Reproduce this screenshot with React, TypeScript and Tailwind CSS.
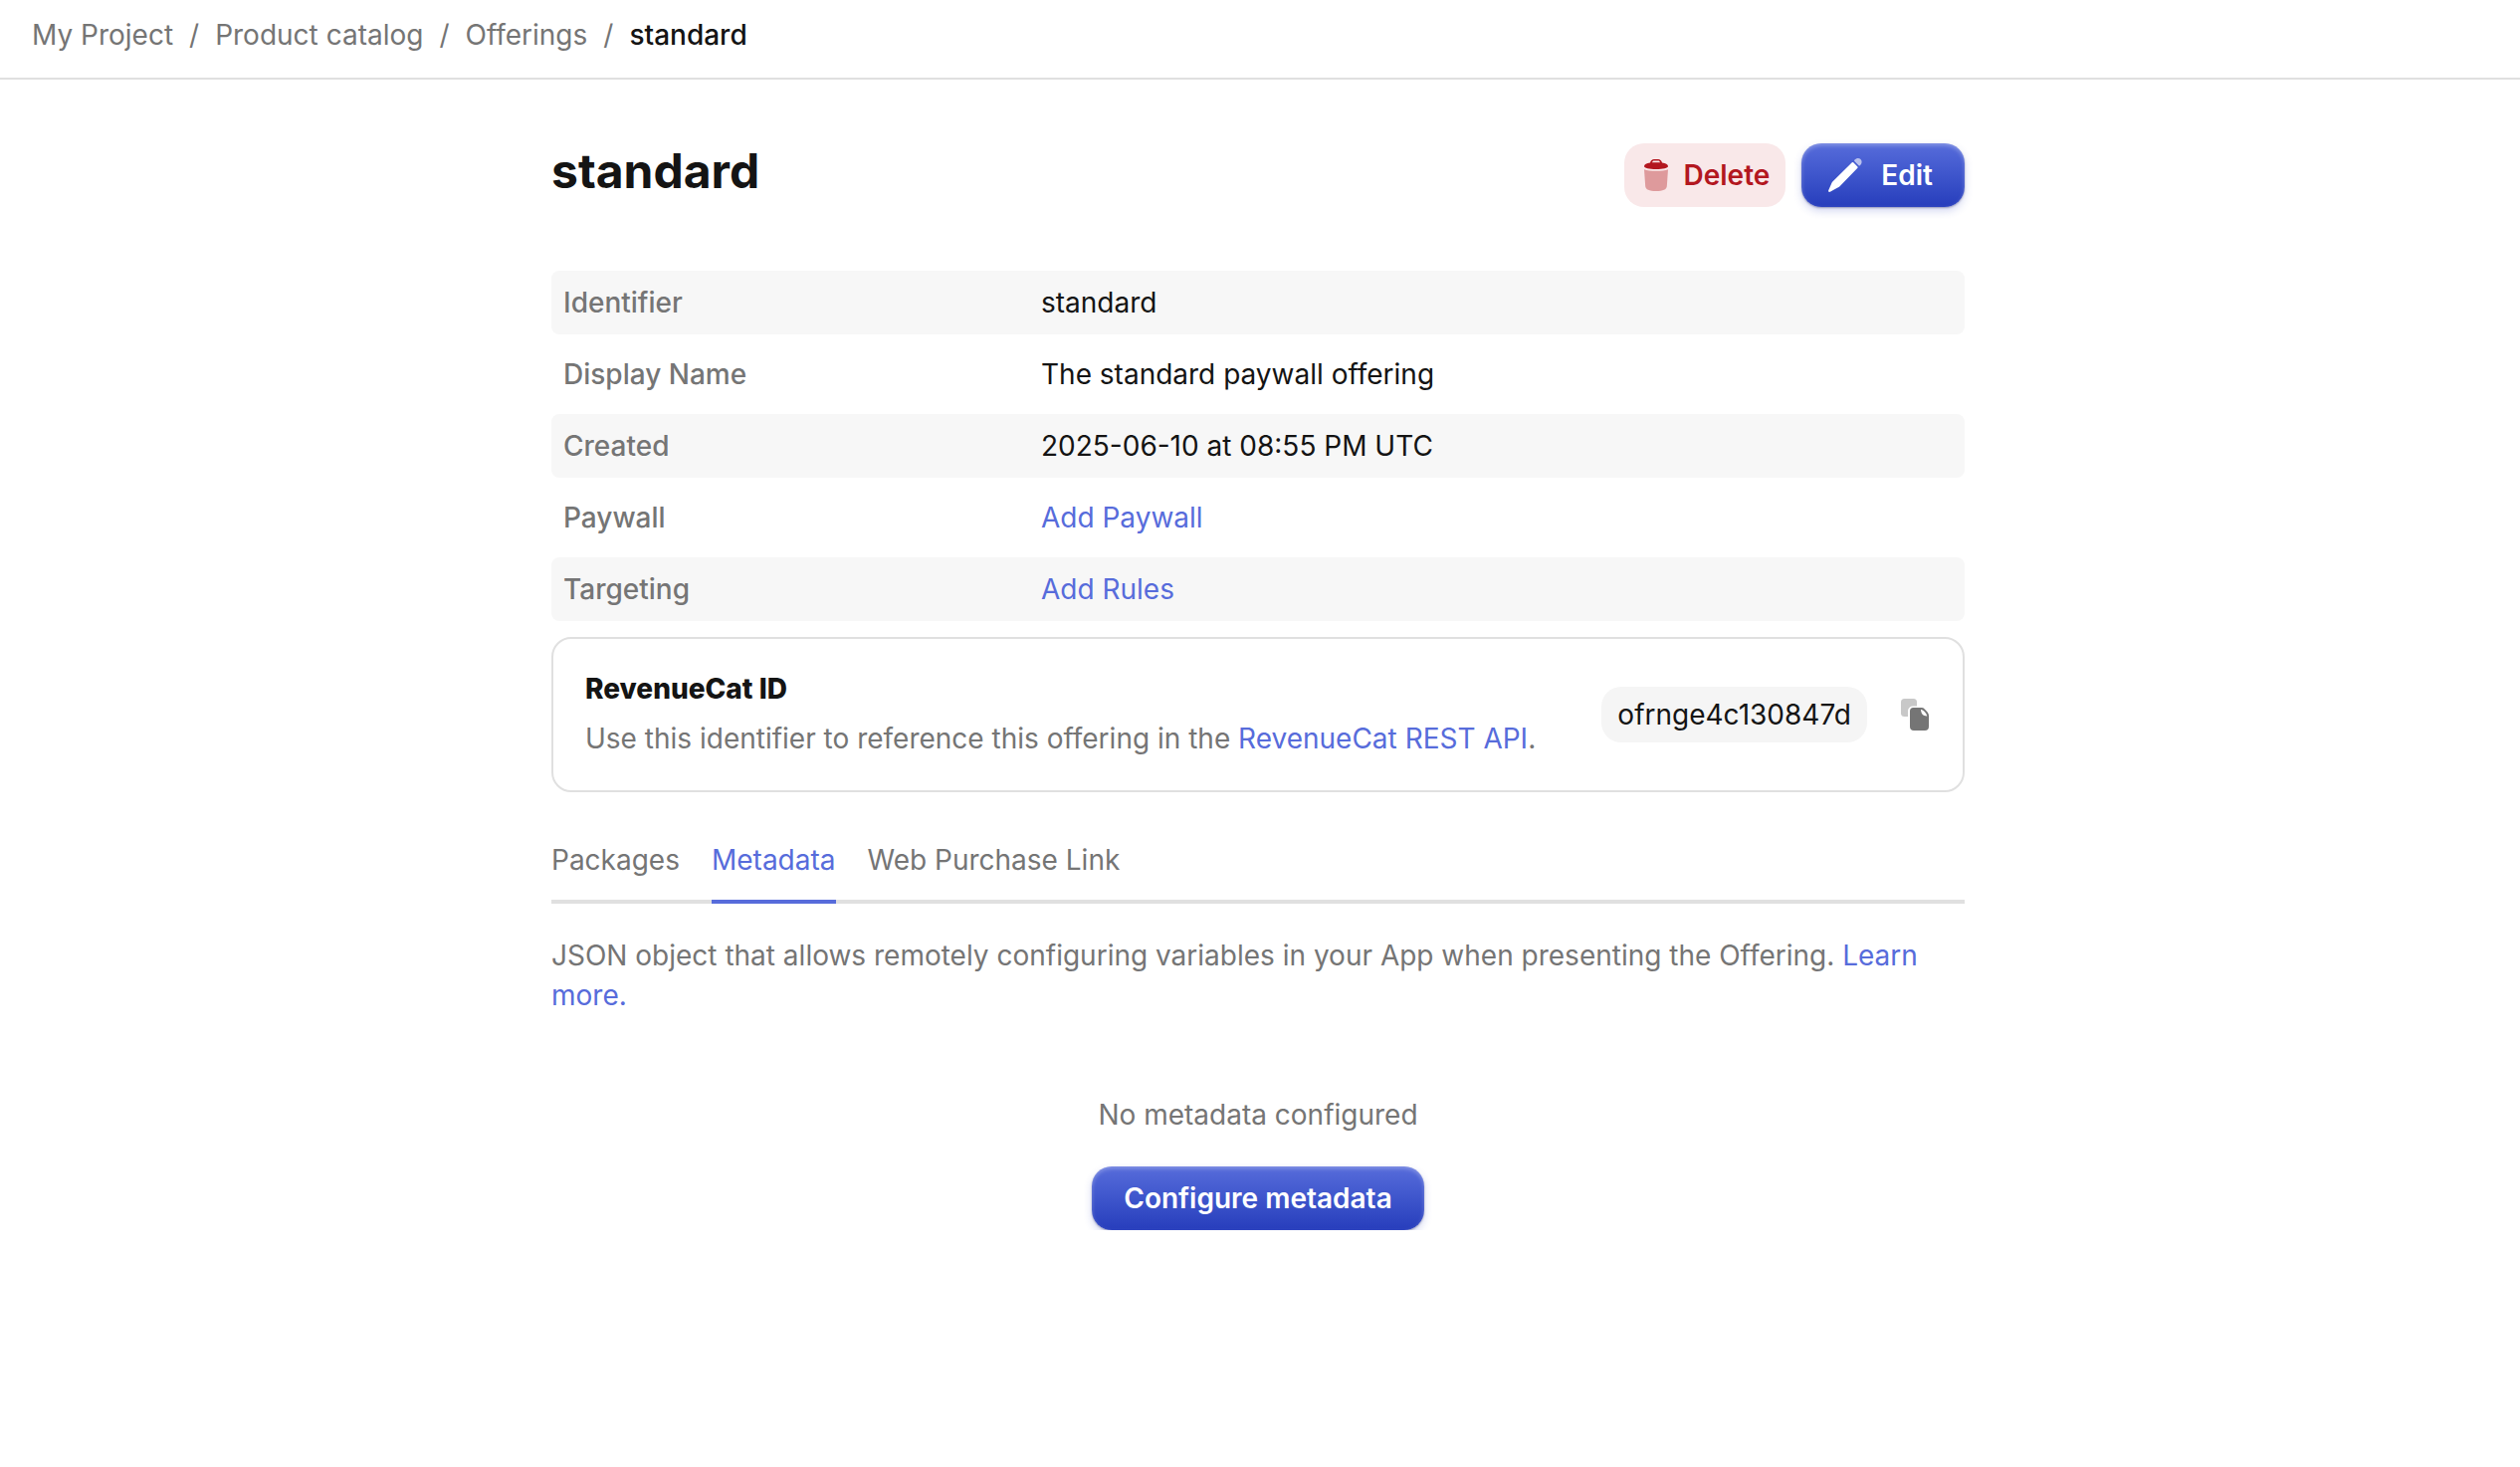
import type { ReactNode } from "react";

const crumbs = ["My Project", "Product catalog", "Offerings"];

const linkClass = "text-[#576cdb]";

const details: { label: string; value: ReactNode }[] = [
  { label: "Identifier", value: "standard" },
  { label: "Display Name", value: "The standard paywall offering" },
  { label: "Created", value: "2025-06-10 at 08:55 PM UTC" },
  { label: "Paywall", value: <a href="#paywall" className={linkClass}>Add Paywall</a> },
  { label: "Targeting", value: <a href="#rules" className={linkClass}>Add Rules</a> },
];

const tabs = ["Packages", "Metadata", "Web Purchase Link"];

const primaryClass =
  "flex h-16 items-center rounded-[20px] bg-linear-to-b from-[#576cdb] to-[#273dbc] font-semibold text-white shadow-[0_4px_8px_rgba(39,61,188,0.2),0_1px_2px_rgba(20,20,60,0.35),inset_0_2px_4px_rgba(255,255,255,0.3)]";

function TrashIcon() {
  return (
    <svg viewBox="0 0 24 32" className="h-8 w-6" aria-hidden="true">
      <path d="M0 7c0-1.800 2.500-3 6-3.500C6.500 1.200 8 0 10 0h4c2 0 3.500 1.200 4 3.500 3.500.5 6 1.700 6 3.500s-5 3-12 3S0 8.800 0 7zm8-3.700a46 46 0 0 1 8 0C15.700 2.200 15 1.600 14 1.600h-4c-1 0-1.700.6-2 1.700z" fill="#b3171f" fillRule="evenodd" />
      <path d="M0 10.300c2.500 1 7 1.500 12 1.500s9.500-.5 12-1.500l-1.200 17C22.500 30.500 19 32 12 32S1.500 30.500 1.200 27.300z" fill="#de9a9c" />
    </svg>
  );
}

function PencilIcon() {
  return (
    <svg viewBox="0 0 40 40" className="size-10" aria-hidden="true">
      <path d="M26.800 7.200q.7-.6 1.400 0l4.200 4.200q.6.700 0 1.400L14.500 31.200q-.8.800-2 1.400L4.800 36.800c-1.200.5-2-.3-1.600-1.500L6.400 28q.4-1 1.200-1.800z" fill="#fff" />
      <path d="M29.300 4.700c2-2.200 4.600-2.300 6.200-.8 1.700 1.600 1.500 4.300-.6 6.300-.4.500-1 .5-1.400 0l-4.200-4.100q-.5-.7 0-1.400z" fill="#b9c1ee" />
    </svg>
  );
}

function CopyIcon() {
  return (
    <svg viewBox="0 0 28 32" className="h-8 w-7" aria-hidden="true">
      <rect width="16" height="18" rx="3.500" fill="#c8c8c8" />
      <path d="M12 7.500h9L29.500 15v20H7V12.500a5 5 0 0 1 5-5z" fill="#fff" />
      <path d="M12.500 9h8q2 0 3.300 1.400l2.800 3Q28 15 28 17v11a4 4 0 0 1-4 4H13a4 4 0 0 1-4-4V12.500A3.500 3.500 0 0 1 12.500 9z" fill="#757575" />
      <path d="M20 10.800c3 .9 5.500 3.500 6.300 6.700-3.800.2-6.300-2.500-6.300-6.700z" fill="#fff" />
    </svg>
  );
}

export default function App() {
  return (
    <div className="font-[Inter,sans-serif] text-[28px] leading-10 text-[#141414]">
      <nav aria-label="Breadcrumb" className="border-b-2 border-[#e0e0e0] px-8 pt-[15px] pb-[23px]">
        <ol className="flex gap-4">
          {crumbs.map((name) => (
            <li key={name} className="flex gap-4 text-[#757575]">
              <a href="#crumb">{name}</a>
              <span aria-hidden="true">/</span>
            </li>
          ))}
          <li aria-current="page" className="font-medium">standard</li>
        </ol>
      </nav>

      <main className="mx-auto max-w-[1424px] pr-1">
        <header className="flex items-start justify-between pt-16">
          <h1 className="text-5xl leading-[56px] font-bold">standard</h1>
          <div className="flex gap-4">
            <button type="button" className="flex h-16 items-center gap-4 rounded-[20px] bg-[#f9e8e9] pr-4 pl-5 font-semibold text-[#b3171f]">
              <TrashIcon />
              Delete
            </button>
            <button type="button" className={`${primaryClass} gap-4 pr-8 pl-6`}>
              <PencilIcon />
              Edit
            </button>
          </div>
        </header>

        <dl className="mt-16 flex flex-col gap-2">
          {details.map(({ label, value }) => (
            <div key={label} className="flex rounded-lg px-3 py-3 odd:bg-[#f7f7f7]">
              <dt className="w-[480px] font-medium text-[#757575]">{label}</dt>
              <dd>{value}</dd>
            </div>
          ))}
        </dl>

        <section className="mt-4 flex items-center justify-between rounded-[20px] border-2 border-[#e0e0e0] p-8">
          <div className="flex flex-col gap-3">
            <h2 className="leading-9 font-extrabold">RevenueCat ID</h2>
            <p className="text-[#757575]">
              Use this identifier to reference this offering in the{" "}
              <a href="#api" className={linkClass}>RevenueCat REST API</a>.
            </p>
          </div>
          <div className="flex items-center gap-8">
            <span className="rounded-[20px] bg-[#f5f5f5] px-4 py-2">ofrnge4c130847d</span>
            <button type="button" aria-label="Copy identifier" className="px-0.5">
              <CopyIcon />
            </button>
          </div>
        </section>

        <div role="tablist" className="mt-12 flex gap-8 border-b-4 border-[#e0e0e0]">
          {tabs.map((tab) => (
            <button
              key={tab}
              type="button"
              role="tab"
              aria-selected={tab === "Metadata"}
              className="-mb-1 border-b-4 border-transparent pb-5 text-[#757575] aria-selected:border-[#576cdb] aria-selected:text-[#576cdb]"
            >
              {tab}
            </button>
          ))}
        </div>

        <p className="mt-8 text-[#757575]">
          JSON object that allows remotely configuring variables in your App when presenting the Offering.{" "}
          <a href="#learn" className={linkClass}>Learn more.</a>
        </p>

        <div className="mt-20 flex flex-col items-center gap-8">
          <p className="text-[#757575]">No metadata configured</p>
          <button type="button" className={`${primaryClass} px-8`}>Configure metadata</button>
        </div>
      </main>
    </div>
  );
}
